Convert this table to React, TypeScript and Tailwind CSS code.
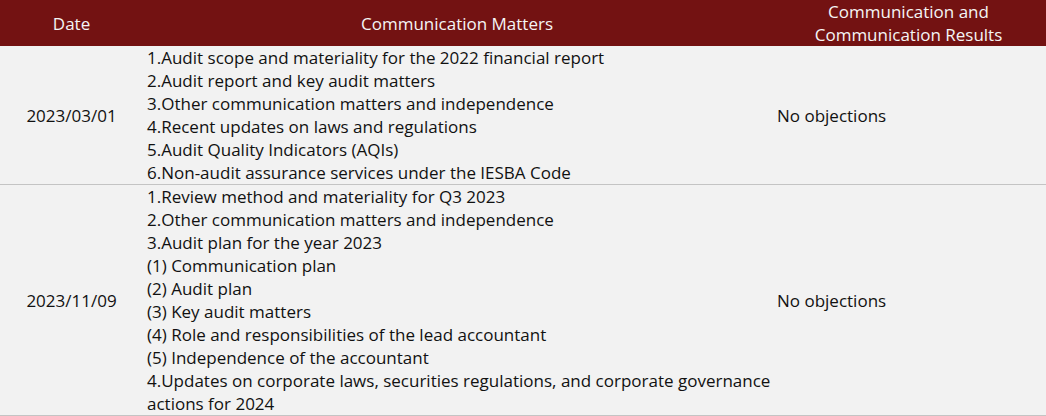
import { FC } from 'react';

type Row = {
    date: string;
    matters: string[];
    result: string;
};

const rows: Row[] = [
    {
        date: '2023/03/01',
        matters: [
            '1.Audit scope and materiality for the 2022 financial report',
            '2.Audit report and key audit matters',
            '3.Other communication matters and independence',
            '4.Recent updates on laws and regulations',
            '5.Audit Quality Indicators (AQIs)',
            '6.Non-audit assurance services under the IESBA Code',
        ],
        result: 'No objections',
    },
    {
        date: '2023/11/09',
        matters: [
            '1.Review method and materiality for Q3 2023',
            '2.Other communication matters and independence',
            '3.Audit plan for the year 2023',
            '(1) Communication plan',
            '(2) Audit plan',
            '(3) Key audit matters',
            '(4) Role and responsibilities of the lead accountant',
            '(5) Independence of the accountant',
            '4.Updates on corporate laws, securities regulations, and corporate governance actions for 2024',
        ],
        result: 'No objections',
    },
];

const App: FC = () => {
    return (
        <div className="w-[1046px] bg-[#f2f2f2] font-['Open_Sans',sans-serif] text-[17px] leading-[23px] text-[#111]">
            {/* Header */}
            <div className="grid grid-cols-[143px_628px_275px] bg-[#731212] text-[#f5f5f5] h-[46px]">
                <div className="flex items-center justify-center">Date</div>
                <div className="flex items-center justify-center">Communication Matters</div>
                <div className="flex items-center justify-center text-center">
                    Communication and
                    <br />
                    Communication Results
                </div>
            </div>

            {/* Body */}
            {rows.map((row, index) => (
                <div key={index} className="grid grid-cols-[143px_628px_275px] border-b border-[#c4c4c4]">
                    <div className="flex items-center justify-center">{row.date}</div>
                    <div className="pl-1">
                        {row.matters.map((line, i) => (
                            <div key={i}>{line}</div>
                        ))}
                    </div>
                    <div className="flex items-center pl-[6px]">{row.result}</div>
                </div>
            ))}
        </div>
    );
};

export default App;
